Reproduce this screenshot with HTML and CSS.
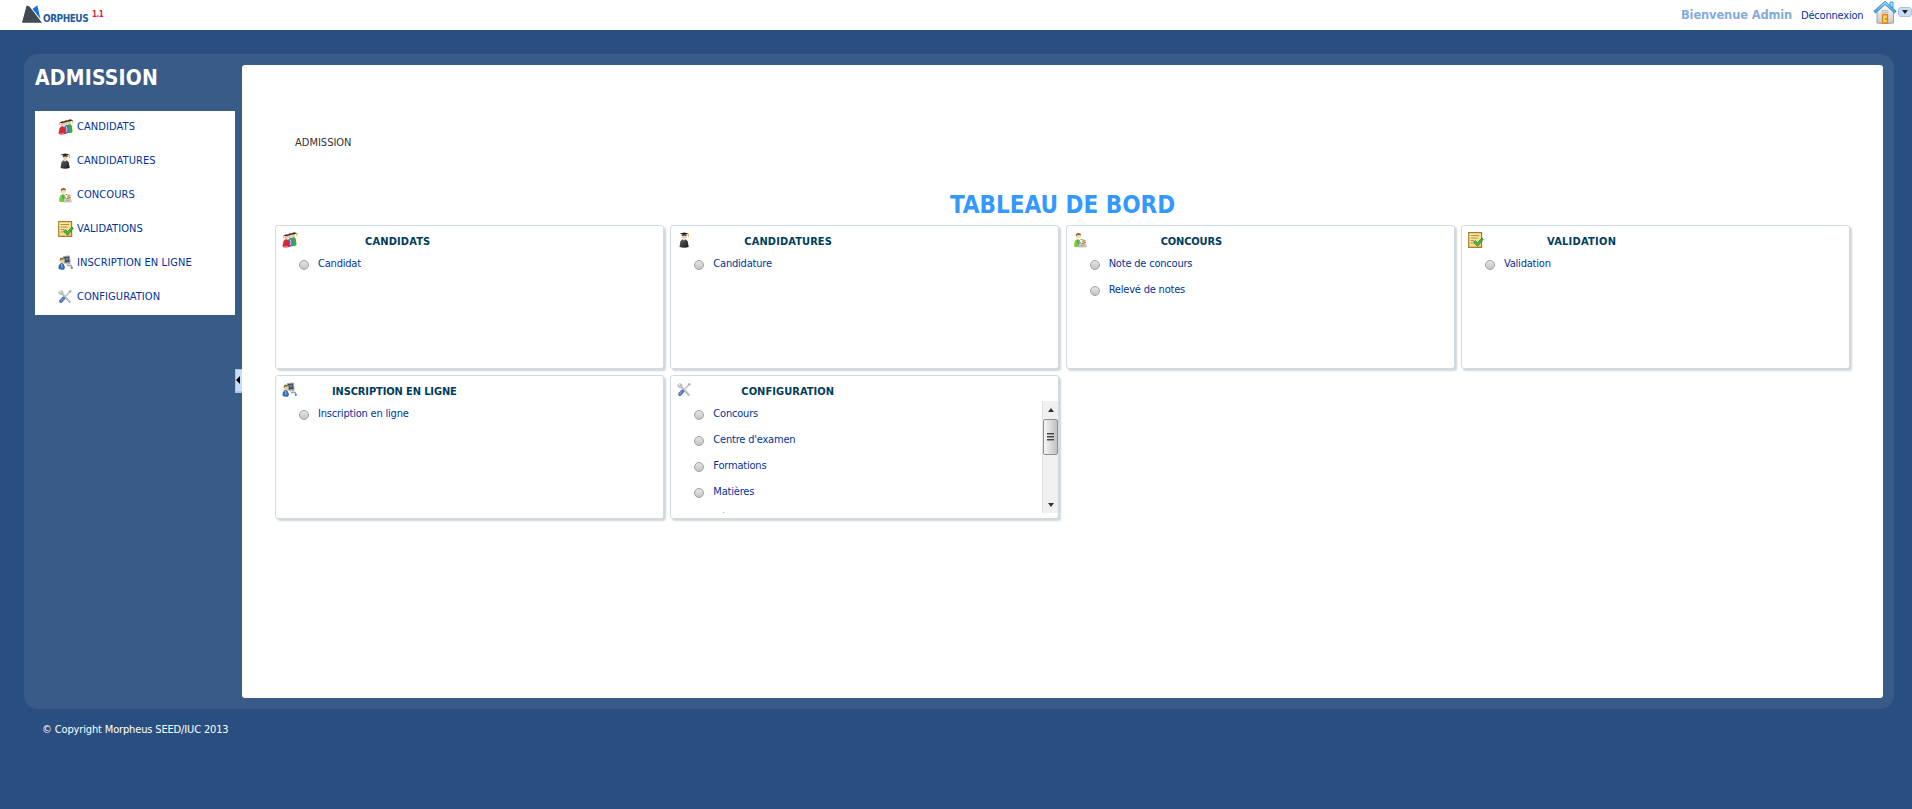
FILE: index.html
```html
<!DOCTYPE html>
<html lang="fr">
<head>
<meta charset="utf-8">
<title>Morpheus - Admission</title>
<link rel="stylesheet" href="styles.css">
</head>
<body>
<svg class="defs" aria-hidden="true">
  <defs>
    <linearGradient id="roof" x1="0" y1="0" x2="0" y2="1"><stop offset="0" stop-color="#a8dcfa"/><stop offset="1" stop-color="#3d9be0"/></linearGradient>
    <linearGradient id="wall" x1="0" y1="0" x2="0" y2="1"><stop offset="0" stop-color="#fff"/><stop offset="1" stop-color="#c9c9c9"/></linearGradient>
    <linearGradient id="robe" x1="0" y1="0" x2="1" y2="1"><stop offset="0" stop-color="#666"/><stop offset="1" stop-color="#151515"/></linearGradient>
    <linearGradient id="paper" x1="0" y1="0" x2="1" y2="1"><stop offset="0" stop-color="#fff3c0"/><stop offset="1" stop-color="#f0cb6c"/></linearGradient>
  </defs>
  <symbol id="i-group" viewBox="0 0 16 16">
    <path d="M9 14V8q0-3 2.500-3T14 8.500l.5 3.500q0 2-3 2z" fill="#3fae2e"/>
    <circle cx="11" cy="3.600" r="2" fill="#efc9a0"/><path d="M8.500 1.700 12 .3l3.500 1L12 2.600z" fill="#333"/><path d="M14.800 1.500v2.500" stroke="#e0a030" stroke-width=".9"/>
    <path d="M5.500 14.500 6 8.500q.6-2.700 2.600-2.700t2.200 2.700l.6 5q-2 1.500-4 1z" fill="#4a78b5"/><path d="M8.200 7.500 9 10l-.5 3" stroke="#b9d3ee" fill="none"/>
    <circle cx="7.700" cy="4.300" r="2" fill="#efc9a0"/><path d="M5 2.500 8.200 1.200l3 1-3.400 1.100z" fill="#333"/>
    <path d="M.5 14 1.500 9.500q1-2.500 2.700-2.500T6.800 9.500l1.200 5Q4.500 16.300 1 15z" fill="#d32a33"/><path d="M2 14.300q2 .8 4 0" stroke="#ef7a7a" fill="none"/>
    <circle cx="4.400" cy="5.300" r="2" fill="#efc9a0"/><path d="M1.200 3.400 4.600 2.200l3 1L4.400 4.300z" fill="#333"/><path d="M1.600 3.800v2.200" stroke="#d99b2b" stroke-width=".8"/>
  </symbol>
  <symbol id="i-grad" viewBox="0 0 16 16">
    <path d="M2.500 15 3.300 9.500Q4.200 7 7 7t3.800 2.500l.9 5.500q-4.500 1.500-9.200 0z" fill="url(#robe)"/>
    <path d="m6 7 1 1.800L8.300 7z" fill="#fff"/>
    <circle cx="7.100" cy="4.800" r="2.300" fill="#f0cfa8"/>
    <path d="M4.900 2.600h4.700v1.400q-2.300-.8-4.700 0z" fill="#333"/><path d="M2.500 1.700 7.100.5l4.700 1-4.600 1.600z" fill="#222"/>
    <path d="m11.100 1.800.3 3" stroke="#e3a52e" stroke-width="1.100"/>
  </symbol>
  <symbol id="i-desk" viewBox="0 0 16 16">
    <path d="M1.200 14.500q-.3-5 2.100-6.800 1.800-1 3.500.3L8 11l-1 3.500q-3.200 1-5.800 0z" fill="#6fd22d"/>
    <path d="m4.600 7.800 1.200 4.700" stroke="#5f7fae" stroke-width="1.200"/>
    <circle cx="5.300" cy="4" r="2.500" fill="#f5dcb8"/><path d="M2.800 4.300Q2.500 1 5.400 1T8 3.500Q5.400 2.300 2.800 4.300z" fill="#946534"/>
    <path d="m5.700 14.900.5-3.600 6 .4 1.100 3.200z" fill="#e4dfd2" stroke="#a59d8c" stroke-width=".7"/>
    <path d="m7.500 7.500 4.800 1-3 1.500 3.500.3-4.200 1.700" stroke="#b98748" fill="none"/><path d="M7.500 13.200h4" stroke="#97928a"/>
  </symbol>
  <symbol id="i-check" viewBox="0 0 16 16">
    <path d="M.7.700h12.900v14.600H.7z" fill="url(#paper)" stroke="#a97d28" stroke-width="1.200"/>
    <path d="M2.500 3.500h8.500M2.500 6h7M2.500 8.500h3.500M2.500 11h3" stroke="#b08f45"/>
    <path d="m5.500 10.300 1.800-1.600 2.200 2L14 6l1.300 1.200L9.700 14.200z" fill="#4fb847" stroke="#23802a" stroke-width=".8"/>
  </symbol>
  <symbol id="i-online" viewBox="0 0 16 16">
    <path d="M5.500 1.500 11.500 1l.6 6.500-6.100.6z" fill="#3a4a5c" stroke="#aaa595"/><path d="m7 3 3.400-.3.200 2-1.800 1z" fill="#6387ab"/>
    <path d="m8 9 4.500-.3M9 10.600l4.300-.3.700 2.700" stroke="#9ba8b5" stroke-width="1.200" fill="none"/><circle cx="13.800" cy="12.800" r="1.100" fill="#5c79a0"/>
    <path d="M.6 14q-.3-4 1.500-5.500Q4 7.300 5.500 8.700L7 12l-.8 2.500q-2.800.8-5.600-.5z" fill="#356bad"/><path d="m3.500 9 .5 4" stroke="#9bbfe5"/>
    <circle cx="4.200" cy="5.400" r="2.500" fill="#f0cda0"/><path d="M1.800 5.700Q1.400 2.600 4.200 2.600t2.600 1.600Q4.200 3.800 1.800 5.700z" fill="#8d7048"/>
  </symbol>
  <symbol id="i-tools" viewBox="0 0 16 16">
    <path d="m3.500 4 8.300 9" stroke="#bcbfc2" stroke-width="2.200" stroke-linecap="round"/>
    <path d="M.9 2.300q-.5 3 2 3.500L5.200 4Q5 1.300 2.500 1.500l1.200 1.500-1 1.200z" fill="#c9cbce" stroke="#aaa" stroke-width=".6"/>
    <path d="M12.500 2 6.800 8.300" stroke="#c3c6c9" stroke-width="1.700"/><path d="m11.500 3.100 1.500-1.600" stroke="#a9acb0" stroke-width="2.200"/>
    <path d="m5.600 9.300-2.800 3" stroke="#4f78b4" stroke-width="3.500" stroke-linecap="round"/><path d="m5 9.300-2.500 2.700" stroke="#8eadd5" stroke-width="1"/>
  </symbol>
</svg>

<header class="topbar">
  <div class="logo">
    <svg class="logo-mark" viewBox="0 0 20 18"><path d="M10.500 4 15.300.3 18.500 14z" fill="#1670ef"/><path d="M4.600.5 0 17.700h20L7.500 1.500z" fill="#414a50"/></svg>
    <span class="logo-name">ORPHEUS</span><span class="logo-version">1.1</span>
  </div>
  <div class="session">
    <span class="welcome">Bienvenue Admin</span>
    <a class="logout" href="#">Déconnexion</a>
    <svg class="home" viewBox="0 0 24 24">
      <path d="M17 2h3v6l-3-2z" fill="#a9dcf7" stroke="#479bd1"/>
      <path d="M4 11 12 4l8.500 7v12q-8.500 1.300-16.500 0z" fill="url(#wall)" stroke="#999" stroke-width=".9"/>
      <path d="M.8 11.300 12 1.200l11.200 10.100-1.700 1.600L12 4.600l-9.500 8.300z" fill="url(#roof)" stroke="#2c89cb" stroke-width=".9"/>
      <path d="M9 10.500h6v2H9z" fill="#ddd" stroke="#aaa" stroke-width=".6"/>
      <path d="M9.500 14.500h5V23h-5z" fill="#ffd65a" stroke="#e3801b" stroke-width="1.300"/><path d="M13 18v2" stroke="#a84b08"/>
    </svg>
    <span class="dropdown"></span>
  </div>
</header>

<div class="frame">
  <aside class="sidebar">
    <h1>ADMISSION</h1>
    <ul class="menu">
      <li><svg class="icon"><use href="#i-group"/></svg><a href="#">CANDIDATS</a></li>
      <li><svg class="icon"><use href="#i-grad"/></svg><a href="#">CANDIDATURES</a></li>
      <li><svg class="icon"><use href="#i-desk"/></svg><a href="#">CONCOURS</a></li>
      <li><svg class="icon"><use href="#i-check"/></svg><a href="#">VALIDATIONS</a></li>
      <li><svg class="icon"><use href="#i-online"/></svg><a href="#">INSCRIPTION EN LIGNE</a></li>
      <li><svg class="icon"><use href="#i-tools"/></svg><a href="#">CONFIGURATION</a></li>
    </ul>
    <span class="collapse"></span>
  </aside>
  <main class="content">
    <div class="breadcrumb">ADMISSION</div>
    <h2>TABLEAU DE BORD</h2>
    <div class="cards">
      <section class="card">
        <header class="t-candidats"><svg class="icon"><use href="#i-group"/></svg><h3>CANDIDATS</h3></header>
        <ul class="links"><li><a href="#">Candidat</a></li></ul>
      </section>
      <section class="card">
        <header class="t-candidatures"><svg class="icon"><use href="#i-grad"/></svg><h3>CANDIDATURES</h3></header>
        <ul class="links"><li><a href="#">Candidature</a></li></ul>
      </section>
      <section class="card">
        <header class="t-concours"><svg class="icon"><use href="#i-desk"/></svg><h3>CONCOURS</h3></header>
        <ul class="links"><li><a href="#">Note de concours</a></li><li><a href="#">Relevé de notes</a></li></ul>
      </section>
      <section class="card">
        <header class="t-validation"><svg class="icon"><use href="#i-check"/></svg><h3>VALIDATION</h3></header>
        <ul class="links"><li><a href="#">Validation</a></li></ul>
      </section>
      <section class="card">
        <header class="t-inscription"><svg class="icon"><use href="#i-online"/></svg><h3>INSCRIPTION EN LIGNE</h3></header>
        <ul class="links"><li><a href="#">Inscription en ligne</a></li></ul>
      </section>
      <section class="card">
        <header class="t-configuration"><svg class="icon"><use href="#i-tools"/></svg><h3>CONFIGURATION</h3></header>
        <div class="scroller">
          <ul class="links"><li><a href="#">Concours</a></li><li><a href="#">Centre d'examen</a></li><li><a href="#">Formations</a></li><li><a href="#">Matières</a></li><li><a href="#">Série</a></li></ul>
          <div class="scrollbar"><span class="up"></span><span class="thumb"><i></i><i></i><i></i></span><span class="down"></span></div>
        </div>
      </section>
    </div>
  </main>
</div>
<footer class="copyright">© Copyright Morpheus SEED/IUC 2013</footer>
</body>
</html>
```
FILE: styles.css
```css
* { box-sizing: border-box; }
body {
  margin: 0;
  height: 809px;
  overflow: hidden;
  background: #294f80;
  color: #333;
  font: 11px/14px "DejaVu Sans Condensed", "DejaVu Sans", sans-serif;
  font-stretch: condensed;
}
h1, h2, h3, ul { margin: 0; padding: 0; }
ul { list-style: none; }
a { color: #003399; text-decoration: none; letter-spacing: -0.2px; }
.defs { position: absolute; width: 0; height: 0; }
.icon { width: 16px; height: 16px; flex: none; }

.topbar {
  height: 30px;
  background: #fff;
  display: flex;
  justify-content: space-between;
}
.logo { display: flex; padding: 5px 0 0 22px; }
.logo-mark { width: 20px; height: 18px; }
.logo-name {
  margin: 7px 0 0 1px;
  width: 49px;
  font-size: 10px;
  font-weight: bold;
  letter-spacing: -0.5px;
  color: #1f5c9e;
}
.logo-version { font-size: 8px; font-weight: bold; color: #e5173f; margin-top: 3px; letter-spacing: -0.5px; }
.session { display: flex; }
.welcome {
  margin-top: 8px;
  width: 120px;
  font-family: "DejaVu Sans", sans-serif;
  font-stretch: normal;
  font-size: 11.500px;
  font-weight: bold;
  letter-spacing: -0.15px;
  color: #85acd9;
  white-space: nowrap;
}
.logout { margin-top: 9px; width: 72px; letter-spacing: -0.2px; }
.home { width: 24px; height: 24px; }
.dropdown {
  width: 14px;
  height: 10px;
  margin: 7px 0 0 1px;
  border: 1px solid #a9c3e4;
  border-radius: 3px;
  background: #c9dcf3;
  display: flex;
  justify-content: center;
  align-items: center;
}
.dropdown::after { content: ""; border: 3.500px solid transparent; border-top: 4px solid #222; border-bottom: 0; }

.frame {
  margin: 24px 18px 0 24px;
  height: 655px;
  padding: 11px;
  border-radius: 14px;
  background: #395b87;
  display: flex;
}
.sidebar { position: relative; width: 207px; flex: none; }
.sidebar h1 {
  height: 46px;
  padding-top: 1px;
  font-size: 21px;
  line-height: 24px;
  letter-spacing: 0.2px;
  color: #fff;
}
.menu { width: 200px; height: 204px; background: #fff; }
.menu li { height: 34px; padding: 8px 0 0 23px; display: flex; gap: 3px; }
.menu a { letter-spacing: 0.08px; padding-top: 1px; }
.collapse {
  position: absolute;
  right: 0;
  top: 304px;
  width: 7px;
  height: 24px;
  background: #c9dcf6;
  border: 1px solid #a9c4e6;
  border-right: 0;
  border-bottom-width: 2px;
}
.collapse::after {
  content: "";
  display: block;
  margin: 6px 0 0 0;
  width: 0;
  border: 4px solid transparent;
  border-right-color: #000;
  border-left: 0;
}

.content { flex: 1; background: #fff; border-radius: 3px; padding: 0 33px 0 33px; }
.breadcrumb { padding: 71px 0 0 20px; height: 122px; }
.content h2 {
  height: 38px;
  padding-top: 3px;
  font-size: 24px;
  line-height: 30px;
  text-align: center;
  color: #3399ff;
}
.cards {
  display: grid;
  grid-template-columns: repeat(4, 389px);
  grid-auto-rows: 144px;
  row-gap: 6px;
  justify-content: space-between;
}
.card {
  border: 1px solid #d0dbe5;
  border-radius: 3px;
  box-shadow: 2px 2px 2px #d2d4d7;
  background: #fff;
}
.card header { display: flex; height: 25px; padding: 6px 0 0 6px; }
.card h3 { font-size: 11px; line-height: 14px; padding-top: 3px; color: #003d5b; white-space: nowrap; }
.t-candidats h3 { margin-left: 67px; letter-spacing: 0.15px; }
.t-candidatures h3 { margin-left: 51px; letter-spacing: 0.1px; }
.t-concours h3 { margin-left: 72px; letter-spacing: -0.15px; }
.t-validation h3 { margin-left: 63px; letter-spacing: 0.25px; }
.t-inscription h3 { margin-left: 34px; letter-spacing: -0.12px; }
.t-configuration h3 { margin-left: 48px; letter-spacing: 0.05px; }
.links { flex: 1; padding: 6px 0 0 23px; }
.links li { height: 26px; display: flex; }
.links li::before {
  content: "";
  width: 8px;
  height: 8px;
  margin: 3px 10px 0 0;
  border: 1px solid #a0a0a0;
  border-radius: 50%;
  background: linear-gradient(#e6e6e6, #c4c4c4);
}
.links a { margin-left: -1px; }
.scroller { display: flex; height: 112px; overflow: hidden; }
.scrollbar {
  width: 16px;
  height: 112px;
  background: #f0f0f0;
  border-left: 1px solid #e2e2e2;
  display: flex;
  flex-direction: column;
  align-items: center;
}
.up { margin-top: 7px; border: 3.500px solid transparent; border-bottom: 4px solid #333; border-top: 0; }
.down { margin-top: 48px; border: 3.500px solid transparent; border-top: 4px solid #333; border-bottom: 0; }
.thumb {
  width: 15px;
  height: 36px;
  margin-top: 7px;
  border: 1px solid #909090;
  border-radius: 2px;
  background: linear-gradient(90deg, #f5f5f5, #dcdcdc 50%, #c0c0c4);
  display: flex;
  flex-direction: column;
  align-items: center;
  justify-content: center;
  gap: 1px;
}
.thumb i { width: 7px; height: 2px; border-top: 1px solid #444; border-bottom: 1px solid #999; }
.copyright { padding: 14px 0 0 42px; color: #fff; letter-spacing: -0.15px; }
```
